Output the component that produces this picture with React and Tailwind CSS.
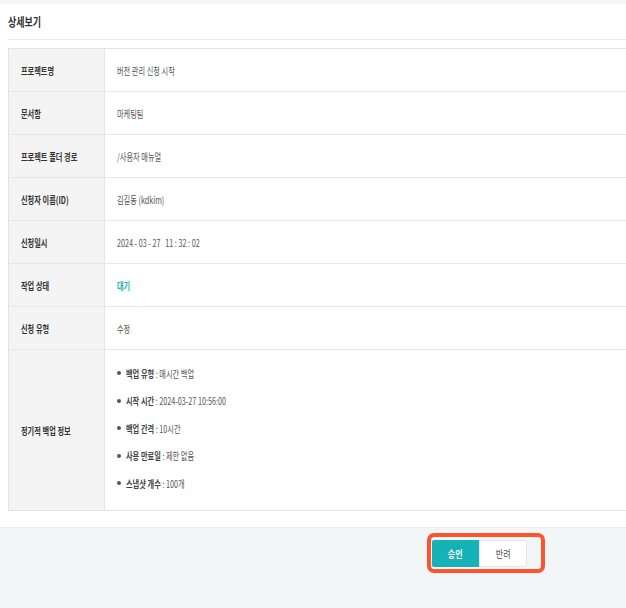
import React from 'react';

const rows = [
  { label: '프로젝트명', value: '버전 관리 신청 시작' },
  { label: '문서함', value: '마케팅팀' },
  { label: '프로젝트 폴더 경로', value: '/사용자 매뉴얼' },
  { label: '신청자 이름(ID)', value: '김길동 (kdkim)' },
  { label: '신청일시', value: '2024 - 03 - 27   11 : 32 : 02' },
  { label: '작업 상태', value: '대기', status: true },
  { label: '신청 유형', value: '수정' },
];

const backup = [
  { k: '백업 유형', v: '매시간 백업' },
  { k: '시작 시간', v: '2024-03-27 10:56:00' },
  { k: '백업 간격', v: '10시간' },
  { k: '사용 만료일', v: '제한 없음' },
  { k: '스냅샷 개수', v: '100개' },
];

const font = { fontFamily: '"Noto Sans CJK KR", "Noto Sans", sans-serif' };

// narrow text like the screenshot
function T({ children, className = '' }) {
  return (
    <span className={`inline-block origin-left scale-x-[0.72] whitespace-pre ${className}`}>{children}</span>
  );
}

export default function App() {
  return (
    <div className="w-[626px] h-[608px] bg-[#f3f6f7] overflow-hidden" style={font}>
      <div className="mt-[4px] bg-white pl-2 pb-4">
        {/* title */}
        <div className="h-[36px] flex items-center border-b border-[#ececec] pt-[2px]">
          <T className="text-[12.5px] font-bold text-[#333]">상세보기</T>
        </div>

        {/* table */}
        <div className="mt-[8px] border-t border-l border-b border-[#e3e3e3]">
          {rows.map((r) => (
            <div key={r.label} className="flex h-[43px] border-b border-[#e8e8e8]">
              <div className="w-[96px] shrink-0 bg-[#f4f4f4] border-r border-[#e6e6e6] flex items-center pl-[12px]">
                <T className="text-[10px] font-bold text-[#333]">{r.label}</T>
              </div>
              <div className="flex-1 flex items-center pl-[12px]">
                <T className={r.status ? 'text-[10px] font-bold text-[#17b0b5]' : 'text-[10px] text-[#555]'}>
                  {r.value}
                </T>
              </div>
            </div>
          ))}
          <div className="flex h-[160px]">
            <div className="w-[96px] shrink-0 bg-[#f4f4f4] border-r border-[#e6e6e6] flex items-center pl-[12px]">
              <T className="text-[10px] font-bold text-[#333]">정기적 백업 정보</T>
            </div>
            <div className="flex-1 flex flex-col justify-center gap-[13.5px] pl-[12px] pb-[4px]">
              {backup.map((b) => (
                <div key={b.k} className="flex items-center h-[14px]">
                  <span className="w-[4px] h-[4px] rounded-full bg-[#555] mr-[5px]" />
                  <T className="text-[10px] text-[#555]">
                    <span className="font-bold text-[#444]">{b.k}</span> : {b.v}
                  </T>
                </div>
              ))}
            </div>
          </div>
        </div>
      </div>

      {/* footer buttons */}
      <div className="border-t border-[#e9eced] pt-[5px] flex justify-end pr-[81px]">
        <div className="border-4 border-[#ff5330] rounded-[7px] pt-[3px] pb-[2px] pl-[1px] pr-[14px] flex">
          <button className="w-[47px] h-[27px] bg-[#15b2b7] text-white text-[10px] font-bold rounded-l-[2px] flex items-center justify-center">
            <span className="inline-block scale-x-[0.8]">승인</span>
          </button>
          <button className="w-[48px] h-[27px] bg-white border border-[#e4e6e8] text-[#555] text-[10px] rounded-r-[2px] flex items-center justify-center">
            <span className="inline-block scale-x-[0.8]">반려</span>
          </button>
        </div>
      </div>
    </div>
  );
}
